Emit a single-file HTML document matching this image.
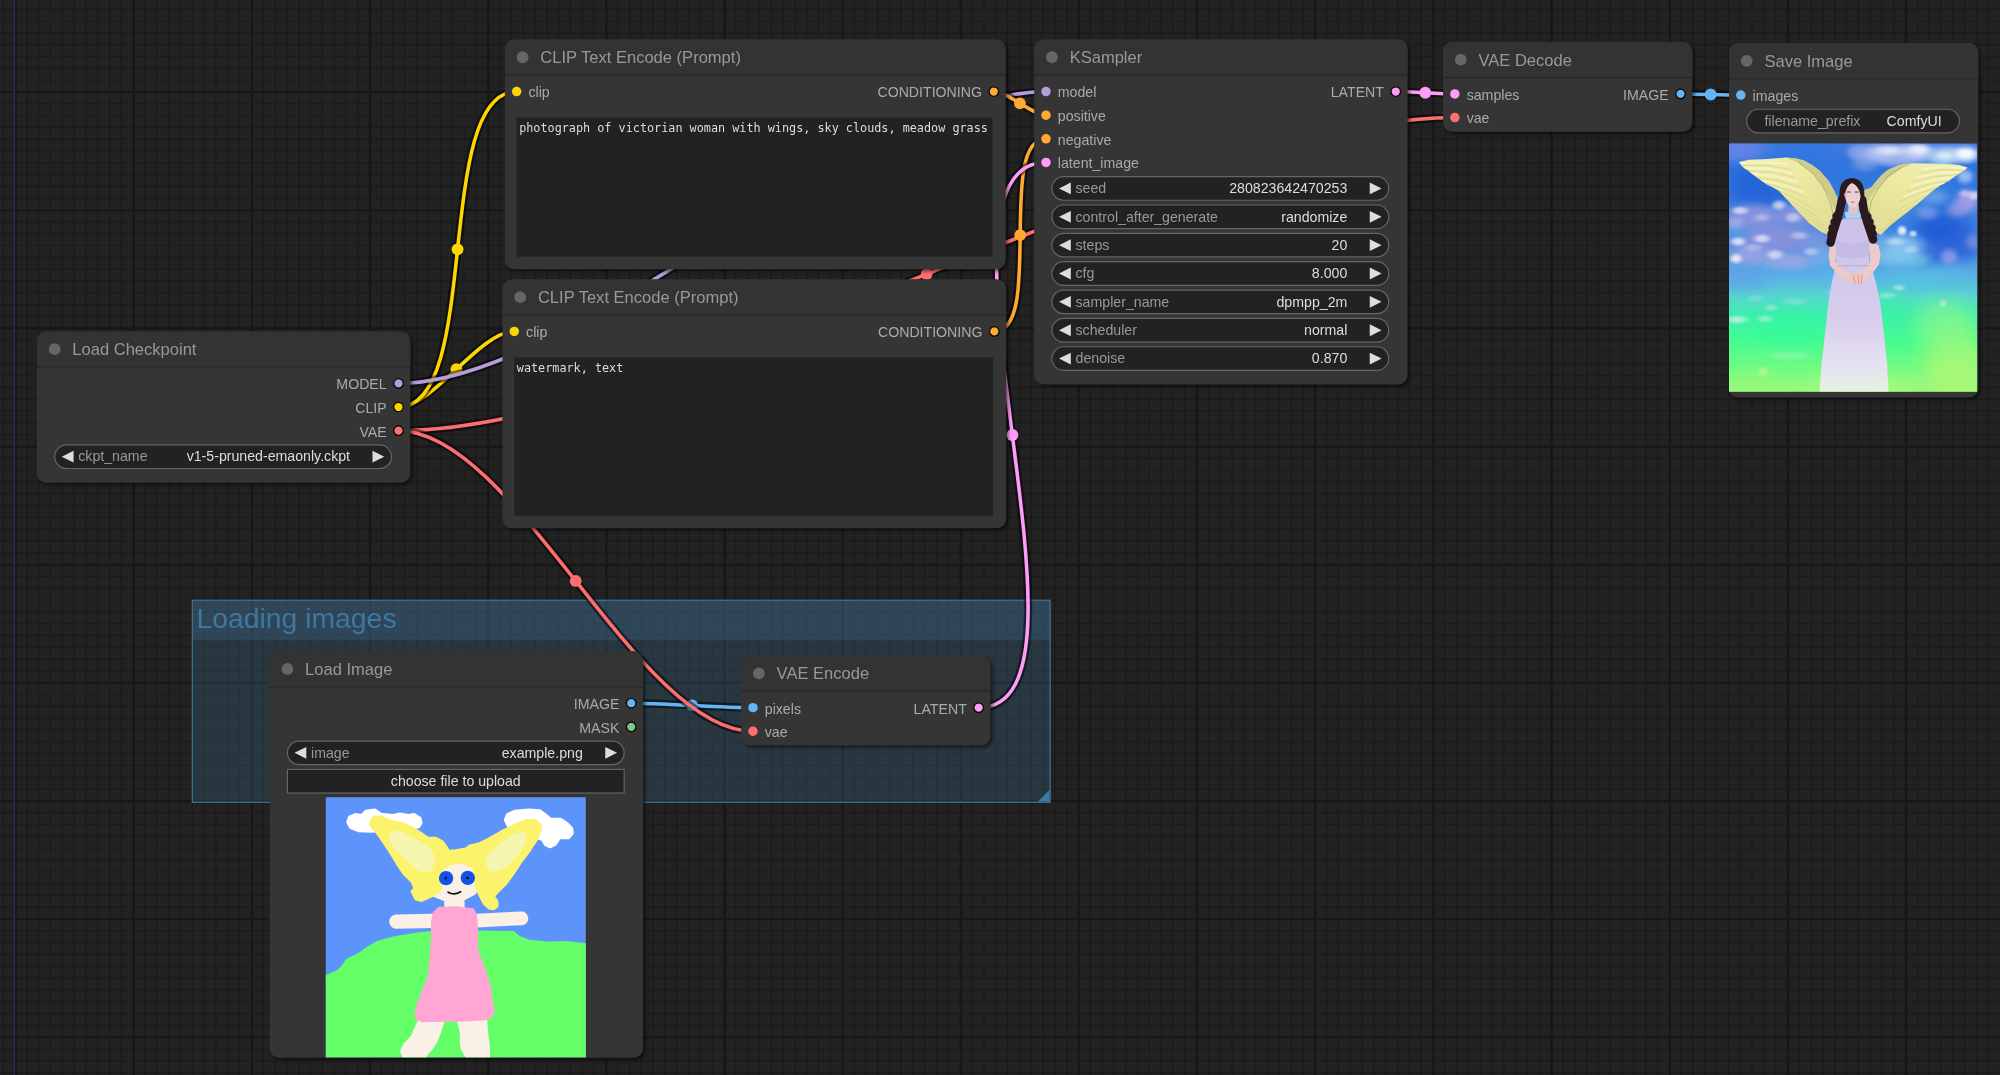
<!DOCTYPE html>
<html lang="en"><head><meta charset="utf-8"><title>ComfyUI</title>
<style>
html,body{margin:0;padding:0;background:#222;overflow:hidden}
body{width:2000px;height:1075px;position:relative;font-family:"Liberation Sans",sans-serif}
#bg,#graph{position:absolute;left:0;top:0;width:2000px;height:1075px;display:block}
#graph{will-change:transform}
text{font-family:"Liberation Sans",sans-serif;font-size:12px}
.nbody{fill:#353535}
.ntitle{fill:#333}
.tt{font-size:14px;fill:#999}
.sl{fill:#aaa}
.r{text-anchor:end}
.c{text-anchor:middle}
.wb{fill:#222;stroke:#666;stroke-width:1}
.ar{fill:#ddd}
.wl{fill:#999}
.wv{fill:#ddd}
.ta{fill:#222}
.mono{font-family:"DejaVu Sans Mono","Liberation Mono",monospace;font-size:10px;fill:#ddd}
.link path{fill:none;stroke-linejoin:round}
.gtitle{font-size:24px;fill:#3f789e}

</style></head><body>
<svg id="bg" width="2000" height="1075" viewBox="0 0 2000 1075">
<rect width="2000" height="1075" fill="#222222"/>
<path fill="#1b1b1b" d="M2.664 0h1.182v1075h-1.182zM26.296 0h1.182v1075h-1.182zM38.112 0h1.182v1075h-1.182zM49.928 0h1.182v1075h-1.182zM61.744 0h1.182v1075h-1.182zM73.56 0h1.182v1075h-1.182zM85.376 0h1.182v1075h-1.182zM97.192 0h1.182v1075h-1.182zM109.008 0h1.182v1075h-1.182zM120.824 0h1.182v1075h-1.182zM144.456 0h1.182v1075h-1.182zM156.272 0h1.182v1075h-1.182zM168.088 0h1.182v1075h-1.182zM179.904 0h1.182v1075h-1.182zM191.72 0h1.182v1075h-1.182zM203.536 0h1.182v1075h-1.182zM215.352 0h1.182v1075h-1.182zM227.168 0h1.182v1075h-1.182zM238.984 0h1.182v1075h-1.182zM262.616 0h1.182v1075h-1.182zM274.432 0h1.182v1075h-1.182zM286.248 0h1.182v1075h-1.182zM298.064 0h1.182v1075h-1.182zM309.88 0h1.182v1075h-1.182zM321.696 0h1.182v1075h-1.182zM333.512 0h1.182v1075h-1.182zM345.328 0h1.182v1075h-1.182zM357.144 0h1.182v1075h-1.182zM380.776 0h1.182v1075h-1.182zM392.592 0h1.182v1075h-1.182zM404.408 0h1.182v1075h-1.182zM416.224 0h1.182v1075h-1.182zM428.04 0h1.182v1075h-1.182zM439.856 0h1.182v1075h-1.182zM451.672 0h1.182v1075h-1.182zM463.488 0h1.182v1075h-1.182zM475.304 0h1.182v1075h-1.182zM498.936 0h1.182v1075h-1.182zM510.752 0h1.182v1075h-1.182zM522.568 0h1.182v1075h-1.182zM534.384 0h1.182v1075h-1.182zM546.2 0h1.182v1075h-1.182zM558.016 0h1.182v1075h-1.182zM569.832 0h1.182v1075h-1.182zM581.648 0h1.182v1075h-1.182zM593.464 0h1.182v1075h-1.182zM617.096 0h1.182v1075h-1.182zM628.912 0h1.182v1075h-1.182zM640.728 0h1.182v1075h-1.182zM652.544 0h1.182v1075h-1.182zM664.36 0h1.182v1075h-1.182zM676.176 0h1.182v1075h-1.182zM687.992 0h1.182v1075h-1.182zM699.808 0h1.182v1075h-1.182zM711.624 0h1.182v1075h-1.182zM735.256 0h1.182v1075h-1.182zM747.072 0h1.182v1075h-1.182zM758.888 0h1.182v1075h-1.182zM770.704 0h1.182v1075h-1.182zM782.52 0h1.182v1075h-1.182zM794.336 0h1.182v1075h-1.182zM806.152 0h1.182v1075h-1.182zM817.968 0h1.182v1075h-1.182zM829.784 0h1.182v1075h-1.182zM853.416 0h1.182v1075h-1.182zM865.232 0h1.182v1075h-1.182zM877.048 0h1.182v1075h-1.182zM888.864 0h1.182v1075h-1.182zM900.68 0h1.182v1075h-1.182zM912.496 0h1.182v1075h-1.182zM924.312 0h1.182v1075h-1.182zM936.128 0h1.182v1075h-1.182zM947.944 0h1.182v1075h-1.182zM971.576 0h1.182v1075h-1.182zM983.392 0h1.182v1075h-1.182zM995.208 0h1.182v1075h-1.182zM1007.024 0h1.182v1075h-1.182zM1018.84 0h1.182v1075h-1.182zM1030.656 0h1.182v1075h-1.182zM1042.472 0h1.182v1075h-1.182zM1054.288 0h1.182v1075h-1.182zM1066.104 0h1.182v1075h-1.182zM1089.736 0h1.182v1075h-1.182zM1101.552 0h1.182v1075h-1.182zM1113.368 0h1.182v1075h-1.182zM1125.184 0h1.182v1075h-1.182zM1137 0h1.182v1075h-1.182zM1148.816 0h1.182v1075h-1.182zM1160.632 0h1.182v1075h-1.182zM1172.448 0h1.182v1075h-1.182zM1184.264 0h1.182v1075h-1.182zM1207.896 0h1.182v1075h-1.182zM1219.712 0h1.182v1075h-1.182zM1231.528 0h1.182v1075h-1.182zM1243.344 0h1.182v1075h-1.182zM1255.16 0h1.182v1075h-1.182zM1266.976 0h1.182v1075h-1.182zM1278.792 0h1.182v1075h-1.182zM1290.608 0h1.182v1075h-1.182zM1302.424 0h1.182v1075h-1.182zM1326.056 0h1.182v1075h-1.182zM1337.872 0h1.182v1075h-1.182zM1349.688 0h1.182v1075h-1.182zM1361.504 0h1.182v1075h-1.182zM1373.32 0h1.182v1075h-1.182zM1385.136 0h1.182v1075h-1.182zM1396.952 0h1.182v1075h-1.182zM1408.768 0h1.182v1075h-1.182zM1420.584 0h1.182v1075h-1.182zM1444.216 0h1.182v1075h-1.182zM1456.032 0h1.182v1075h-1.182zM1467.848 0h1.182v1075h-1.182zM1479.664 0h1.182v1075h-1.182zM1491.48 0h1.182v1075h-1.182zM1503.296 0h1.182v1075h-1.182zM1515.112 0h1.182v1075h-1.182zM1526.928 0h1.182v1075h-1.182zM1538.744 0h1.182v1075h-1.182zM1562.376 0h1.182v1075h-1.182zM1574.192 0h1.182v1075h-1.182zM1586.008 0h1.182v1075h-1.182zM1597.824 0h1.182v1075h-1.182zM1609.64 0h1.182v1075h-1.182zM1621.456 0h1.182v1075h-1.182zM1633.272 0h1.182v1075h-1.182zM1645.088 0h1.182v1075h-1.182zM1656.904 0h1.182v1075h-1.182zM1680.536 0h1.182v1075h-1.182zM1692.352 0h1.182v1075h-1.182zM1704.168 0h1.182v1075h-1.182zM1715.984 0h1.182v1075h-1.182zM1727.8 0h1.182v1075h-1.182zM1739.616 0h1.182v1075h-1.182zM1751.432 0h1.182v1075h-1.182zM1763.248 0h1.182v1075h-1.182zM1775.064 0h1.182v1075h-1.182zM1798.696 0h1.182v1075h-1.182zM1810.512 0h1.182v1075h-1.182zM1822.328 0h1.182v1075h-1.182zM1834.144 0h1.182v1075h-1.182zM1845.96 0h1.182v1075h-1.182zM1857.776 0h1.182v1075h-1.182zM1869.592 0h1.182v1075h-1.182zM1881.408 0h1.182v1075h-1.182zM1893.224 0h1.182v1075h-1.182zM1916.856 0h1.182v1075h-1.182zM1928.672 0h1.182v1075h-1.182zM1940.488 0h1.182v1075h-1.182zM1952.304 0h1.182v1075h-1.182zM1964.12 0h1.182v1075h-1.182zM1975.936 0h1.182v1075h-1.182zM1987.752 0h1.182v1075h-1.182zM1999.568 0h1.182v1075h-1.182zM0 8.592h2000v1.182h-2000zM0 20.408h2000v1.182h-2000zM0 32.224h2000v1.182h-2000zM0 44.04h2000v1.182h-2000zM0 55.856h2000v1.182h-2000zM0 67.672h2000v1.182h-2000zM0 79.488h2000v1.182h-2000zM0 103.12h2000v1.182h-2000zM0 114.936h2000v1.182h-2000zM0 126.752h2000v1.182h-2000zM0 138.568h2000v1.182h-2000zM0 150.384h2000v1.182h-2000zM0 162.2h2000v1.182h-2000zM0 174.016h2000v1.182h-2000zM0 185.832h2000v1.182h-2000zM0 197.648h2000v1.182h-2000zM0 221.28h2000v1.182h-2000zM0 233.096h2000v1.182h-2000zM0 244.912h2000v1.182h-2000zM0 256.728h2000v1.182h-2000zM0 268.544h2000v1.182h-2000zM0 280.36h2000v1.182h-2000zM0 292.176h2000v1.182h-2000zM0 303.992h2000v1.182h-2000zM0 315.808h2000v1.182h-2000zM0 339.44h2000v1.182h-2000zM0 351.256h2000v1.182h-2000zM0 363.072h2000v1.182h-2000zM0 374.888h2000v1.182h-2000zM0 386.704h2000v1.182h-2000zM0 398.52h2000v1.182h-2000zM0 410.336h2000v1.182h-2000zM0 422.152h2000v1.182h-2000zM0 433.968h2000v1.182h-2000zM0 457.6h2000v1.182h-2000zM0 469.416h2000v1.182h-2000zM0 481.232h2000v1.182h-2000zM0 493.048h2000v1.182h-2000zM0 504.864h2000v1.182h-2000zM0 516.68h2000v1.182h-2000zM0 528.496h2000v1.182h-2000zM0 540.312h2000v1.182h-2000zM0 552.128h2000v1.182h-2000zM0 575.76h2000v1.182h-2000zM0 587.576h2000v1.182h-2000zM0 599.392h2000v1.182h-2000zM0 611.208h2000v1.182h-2000zM0 623.024h2000v1.182h-2000zM0 634.84h2000v1.182h-2000zM0 646.656h2000v1.182h-2000zM0 658.472h2000v1.182h-2000zM0 670.288h2000v1.182h-2000zM0 693.92h2000v1.182h-2000zM0 705.736h2000v1.182h-2000zM0 717.552h2000v1.182h-2000zM0 729.368h2000v1.182h-2000zM0 741.184h2000v1.182h-2000zM0 753h2000v1.182h-2000zM0 764.816h2000v1.182h-2000zM0 776.632h2000v1.182h-2000zM0 788.448h2000v1.182h-2000zM0 812.08h2000v1.182h-2000zM0 823.896h2000v1.182h-2000zM0 835.712h2000v1.182h-2000zM0 847.528h2000v1.182h-2000zM0 859.344h2000v1.182h-2000zM0 871.16h2000v1.182h-2000zM0 882.976h2000v1.182h-2000zM0 894.792h2000v1.182h-2000zM0 906.608h2000v1.182h-2000zM0 930.24h2000v1.182h-2000zM0 942.056h2000v1.182h-2000zM0 953.872h2000v1.182h-2000zM0 965.688h2000v1.182h-2000zM0 977.504h2000v1.182h-2000zM0 989.32h2000v1.182h-2000zM0 1001.136h2000v1.182h-2000zM0 1012.952h2000v1.182h-2000zM0 1024.768h2000v1.182h-2000zM0 1048.4h2000v1.182h-2000zM0 1060.216h2000v1.182h-2000zM0 1072.032h2000v1.182h-2000z"/>
<path fill="#171717" d="M14.362 0h2.363v1075h-2.363zM132.522 0h2.363v1075h-2.363zM250.682 0h2.363v1075h-2.363zM368.842 0h2.363v1075h-2.363zM487.002 0h2.363v1075h-2.363zM605.162 0h2.363v1075h-2.363zM723.322 0h2.363v1075h-2.363zM841.482 0h2.363v1075h-2.363zM959.642 0h2.363v1075h-2.363zM1077.802 0h2.363v1075h-2.363zM1195.962 0h2.363v1075h-2.363zM1314.122 0h2.363v1075h-2.363zM1432.282 0h2.363v1075h-2.363zM1550.442 0h2.363v1075h-2.363zM1668.602 0h2.363v1075h-2.363zM1786.762 0h2.363v1075h-2.363zM1904.922 0h2.363v1075h-2.363zM0 91.008h2000v2.245h-2000zM0 209.168h2000v2.245h-2000zM0 327.328h2000v2.245h-2000zM0 445.488h2000v2.245h-2000zM0 563.648h2000v2.245h-2000zM0 681.808h2000v2.245h-2000zM0 799.968h2000v2.245h-2000zM0 918.128h2000v2.245h-2000zM0 1036.288h2000v2.245h-2000z"/>
</svg>
<svg id="graph" width="2000" height="1075" viewBox="0 0 2000 1075">
<defs><filter id="sh" x="-5%" y="-5%" width="112%" height="115%" color-interpolation-filters="sRGB"><feDropShadow dx="2" dy="2" stdDeviation="1.5" flood-color="#000" flood-opacity=".5"/></filter></defs>
<g id="world" transform="translate(14.48 -144.78) scale(1.1816)">
<rect x="0" y="0" width="2000" height="1075" fill="none" stroke="#235" stroke-width="1"/>
<g class="group">
<rect x="150.5" y="630.5" width="726" height="33.599999999999994" fill="#3f789e" fill-opacity=".25"/>
<rect x="150.5" y="630.5" width="726" height="171" fill="#3f789e" fill-opacity=".25"/>
<rect x="150.5" y="630.5" width="726" height="171" fill="none" stroke="#3f789e" stroke-width="1"/>
<path d="M876 801L866 801L876 791Z" fill="#3f789e"/>
<text class="gtitle" x="154" y="653.7">Loading images</text>
</g>
<g id="links">
<g class="link"><path d="M325 467C354.262 467 393.738 403 423 403" stroke="#000" stroke-opacity=".5" stroke-width="7"/><path d="M325 467C354.262 467 393.738 403 423 403" stroke="#FFD500" stroke-width="3"/><circle cx="374" cy="435" r="5" fill="#FFD500"/></g>
<g class="link"><path d="M325 467C396.278 467 353.722 200 425 200" stroke="#000" stroke-opacity=".5" stroke-width="7"/><path d="M325 467C396.278 467 353.722 200 425 200" stroke="#FFD500" stroke-width="3"/><circle cx="375" cy="333.5" r="5" fill="#FFD500"/></g>
<g class="link"><path d="M1169 200C1181.51 200 1206.49 202 1219 202" stroke="#000" stroke-opacity=".5" stroke-width="7"/><path d="M1169 200C1181.51 200 1206.49 202 1219 202" stroke="#FF9CF9" stroke-width="3"/><circle cx="1194" cy="201" r="5" fill="#FF9CF9"/></g>
<g class="link"><path d="M325 487C558.112 487 985.888 222 1219 222" stroke="#000" stroke-opacity=".5" stroke-width="7"/><path d="M325 487C558.112 487 985.888 222 1219 222" stroke="#FF6E6E" stroke-width="3"/><circle cx="772" cy="354.5" r="5" fill="#FF6E6E"/></g>
<g class="link"><path d="M1410 202C1422.752 202 1448.248 203 1461 203" stroke="#000" stroke-opacity=".5" stroke-width="7"/><path d="M1410 202C1422.752 202 1448.248 203 1461 203" stroke="#64B5F6" stroke-width="3"/><circle cx="1435.5" cy="202.5" r="5" fill="#64B5F6"/></g>
<g class="link"><path d="M521.98 717.68C547.747 717.68 599.213 721.4 624.98 721.4" stroke="#000" stroke-opacity=".5" stroke-width="7"/><path d="M521.98 717.68C547.747 717.68 599.213 721.4 624.98 721.4" stroke="#64B5F6" stroke-width="3"/><circle cx="573.48" cy="719.54" r="5" fill="#64B5F6"/></g>
<g class="link"><path d="M325 487C423.332 487 526.648 741.4 624.98 741.4" stroke="#000" stroke-opacity=".5" stroke-width="7"/><path d="M325 487C423.332 487 526.648 741.4 624.98 741.4" stroke="#FF6E6E" stroke-width="3"/><circle cx="474.99" cy="614.2" r="5" fill="#FF6E6E"/></g>
<g class="link"><path d="M325 447C475.273 447 722.727 200 873 200" stroke="#000" stroke-opacity=".5" stroke-width="7"/><path d="M325 447C475.273 447 722.727 200 873 200" stroke="#B39DDB" stroke-width="3"/><circle cx="599" cy="323.5" r="5" fill="#B39DDB"/></g>
<g class="link"><path d="M828.845 200C840.963 200 860.882 220 873 220" stroke="#000" stroke-opacity=".5" stroke-width="7"/><path d="M828.845 200C840.963 200 860.882 220 873 220" stroke="#FFA931" stroke-width="3"/><circle cx="850.923" cy="210" r="5" fill="#FFA931"/></g>
<g class="link"><path d="M829.278 403C871.469 403 830.809 240 873 240" stroke="#000" stroke-opacity=".5" stroke-width="7"/><path d="M829.278 403C871.469 403 830.809 240 873 240" stroke="#FFA931" stroke-width="3"/><circle cx="851.139" cy="321.5" r="5" fill="#FFA931"/></g>
<g class="link"><path d="M815.98 721.4C932.207 721.4 756.773 260 873 260" stroke="#000" stroke-opacity=".5" stroke-width="7"/><path d="M815.98 721.4C932.207 721.4 756.773 260 873 260" stroke="#FF9CF9" stroke-width="3"/><circle cx="844.49" cy="490.7" r="5" fill="#FF9CF9"/></g>
</g>
<g class="node" transform="translate(413 389)">
<rect class="nbody" x="0" y="-30" width="426.278" height="210.606" rx="8" filter="url(#sh)"/>
<path class="ntitle" d="M0 0V-22a8 8 0 0 1 8-8H418.278a8 8 0 0 1 8 8V0Z"/>
<rect x="0" y="-.55" width="426.278" height="1.45" fill="#000" fill-opacity=".2"/>
<circle cx="15" cy="-15" r="5" fill="#666"/>
<text class="tt" x="30" y="-10">CLIP Text Encode (Prompt)</text>
<circle cx="10" cy="14" r="4" fill="#FFD500"/>
<text class="sl" x="20" y="19">clip</text>
<circle cx="416.278" cy="14" r="4" fill="#FFA931" stroke="#000"/>
<text class="sl r" x="406.278" y="19">CONDITIONING</text>
<rect class="ta" x="10" y="36" width="405.278" height="134.106"/>
<text class="mono" x="12.1" y="48.65">watermark, text</text>
</g>
<g class="node" transform="translate(415 186)">
<rect class="nbody" x="0" y="-30" width="423.845" height="194.313" rx="8" filter="url(#sh)"/>
<path class="ntitle" d="M0 0V-22a8 8 0 0 1 8-8H415.845a8 8 0 0 1 8 8V0Z"/>
<rect x="0" y="-.55" width="423.845" height="1.45" fill="#000" fill-opacity=".2"/>
<circle cx="15" cy="-15" r="5" fill="#666"/>
<text class="tt" x="30" y="-10">CLIP Text Encode (Prompt)</text>
<circle cx="10" cy="14" r="4" fill="#FFD500"/>
<text class="sl" x="20" y="19">clip</text>
<circle cx="413.845" cy="14" r="4" fill="#FFA931" stroke="#000"/>
<text class="sl r" x="403.845" y="19">CONDITIONING</text>
<rect class="ta" x="10" y="36" width="402.845" height="117.813"/>
<text class="mono" x="12.1" y="48.65">photograph of victorian woman with wings, sky clouds, meadow grass</text>
</g>
<g class="node" transform="translate(1209 188)">
<rect class="nbody" x="0" y="-30" width="211" height="76" rx="8" filter="url(#sh)"/>
<path class="ntitle" d="M0 0V-22a8 8 0 0 1 8-8H203a8 8 0 0 1 8 8V0Z"/>
<rect x="0" y="-.55" width="211" height="1.45" fill="#000" fill-opacity=".2"/>
<circle cx="15" cy="-15" r="5" fill="#666"/>
<text class="tt" x="30" y="-10">VAE Decode</text>
<circle cx="10" cy="14" r="4" fill="#FF9CF9"/>
<text class="sl" x="20" y="19">samples</text>
<circle cx="10" cy="34" r="4" fill="#FF6E6E"/>
<text class="sl" x="20" y="39">vae</text>
<circle cx="201" cy="14" r="4" fill="#64B5F6" stroke="#000"/>
<text class="sl r" x="191" y="19">IMAGE</text>
</g>
<g class="node" transform="translate(1451 189)">
<rect class="nbody" x="0" y="-30" width="211" height="300" rx="8" filter="url(#sh)"/>
<path class="ntitle" d="M0 0V-22a8 8 0 0 1 8-8H203a8 8 0 0 1 8 8V0Z"/>
<rect x="0" y="-.55" width="211" height="1.45" fill="#000" fill-opacity=".2"/>
<circle cx="15" cy="-15" r="5" fill="#666"/>
<text class="tt" x="30" y="-10">Save Image</text>
<circle cx="10" cy="14" r="4" fill="#64B5F6"/>
<text class="sl" x="20" y="19">images</text>
<rect class="wb" x="15" y="26" width="180" height="20" rx="10"/>
<text class="wl" x="30" y="40">filename_prefix</text>
<text class="wv r" x="180" y="40">ComfyUI</text>
<g class="img" transform="translate(0 55) scale(0.846774)"><defs><linearGradient id="sky" x1="0" y1="0" x2="0" y2="1"><stop offset="0" stop-color="#4279e2"/><stop offset=".10" stop-color="#2f74de"/><stop offset=".30" stop-color="#3a7fe0"/><stop offset=".44" stop-color="#4a90e3"/><stop offset=".54" stop-color="#5cb2e6"/><stop offset=".61" stop-color="#55d6cf"/><stop offset=".69" stop-color="#3cf0aa"/><stop offset=".78" stop-color="#44fb92"/><stop offset=".89" stop-color="#70fb82"/><stop offset="1" stop-color="#96f97a"/></linearGradient><linearGradient id="dress" x1="0" y1="0" x2="0" y2="1"><stop offset="0" stop-color="#cbc1e8"/><stop offset=".62" stop-color="#d8cfee"/><stop offset=".85" stop-color="#e6e2f0"/><stop offset="1" stop-color="#e4f2e2"/></linearGradient><linearGradient id="wingL" x1="0" y1="0" x2="1" y2="1"><stop offset="0" stop-color="#f3f0b8"/><stop offset=".5" stop-color="#ebe9a0"/><stop offset="1" stop-color="#dddc92"/></linearGradient><linearGradient id="wingR" x1="1" y1="0" x2="0" y2="1"><stop offset="0" stop-color="#f3f0b8"/><stop offset=".5" stop-color="#ebe9a0"/><stop offset="1" stop-color="#dddc92"/></linearGradient><clipPath id="aclip"><rect width="248" height="248"/></clipPath></defs><g clip-path="url(#aclip)"><rect x="-4" y="-4" width="256" height="256" fill="url(#sky)"/><radialGradient id="ag1"><stop offset="0" stop-color="#2360d8" stop-opacity="0.9"/><stop offset=".4" stop-color="#2360d8" stop-opacity="0.738"/><stop offset=".72" stop-color="#2360d8" stop-opacity="0.27"/><stop offset="1" stop-color="#2360d8" stop-opacity="0"/></radialGradient><ellipse cx="30" cy="42" rx="49" ry="33" fill="url(#ag1)"/><radialGradient id="ag2"><stop offset="0" stop-color="#6f86ea" stop-opacity="0.8"/><stop offset=".4" stop-color="#6f86ea" stop-opacity="0.656"/><stop offset=".72" stop-color="#6f86ea" stop-opacity="0.24"/><stop offset="1" stop-color="#6f86ea" stop-opacity="0"/></radialGradient><ellipse cx="12" cy="6" rx="41" ry="19" fill="url(#ag2)"/><radialGradient id="ag3"><stop offset="0" stop-color="#2f78e0" stop-opacity="0.7"/><stop offset=".4" stop-color="#2f78e0" stop-opacity="0.574"/><stop offset=".72" stop-color="#2f78e0" stop-opacity="0.21"/><stop offset="1" stop-color="#2f78e0" stop-opacity="0"/></radialGradient><ellipse cx="70" cy="8" rx="51" ry="19" fill="url(#ag3)"/><radialGradient id="ag4"><stop offset="0" stop-color="#1f58d4" stop-opacity="0.95"/><stop offset=".4" stop-color="#1f58d4" stop-opacity="0.779"/><stop offset=".72" stop-color="#1f58d4" stop-opacity="0.285"/><stop offset="1" stop-color="#1f58d4" stop-opacity="0"/></radialGradient><ellipse cx="212" cy="88" rx="43" ry="29" fill="url(#ag4)"/><radialGradient id="ag5"><stop offset="0" stop-color="#2a64d8" stop-opacity="0.8"/><stop offset=".4" stop-color="#2a64d8" stop-opacity="0.656"/><stop offset=".72" stop-color="#2a64d8" stop-opacity="0.24"/><stop offset="1" stop-color="#2a64d8" stop-opacity="0"/></radialGradient><ellipse cx="200" cy="108" rx="41" ry="20" fill="url(#ag5)"/><radialGradient id="ag6"><stop offset="0" stop-color="#2a62d8" stop-opacity="0.8"/><stop offset=".4" stop-color="#2a62d8" stop-opacity="0.656"/><stop offset=".72" stop-color="#2a62d8" stop-opacity="0.24"/><stop offset="1" stop-color="#2a62d8" stop-opacity="0"/></radialGradient><ellipse cx="236" cy="102" rx="25" ry="23" fill="url(#ag6)"/><radialGradient id="ag7"><stop offset="0" stop-color="#3f97e6" stop-opacity="0.6"/><stop offset=".4" stop-color="#3f97e6" stop-opacity="0.492"/><stop offset=".72" stop-color="#3f97e6" stop-opacity="0.18"/><stop offset="1" stop-color="#3f97e6" stop-opacity="0"/></radialGradient><ellipse cx="175" cy="50" rx="31" ry="31" fill="url(#ag7)"/><radialGradient id="ag8"><stop offset="0" stop-color="#b4f874" stop-opacity="0.8"/><stop offset=".4" stop-color="#b4f874" stop-opacity="0.656"/><stop offset=".72" stop-color="#b4f874" stop-opacity="0.24"/><stop offset="1" stop-color="#b4f874" stop-opacity="0"/></radialGradient><ellipse cx="228" cy="225" rx="51" ry="56" fill="url(#ag8)"/><radialGradient id="ag9"><stop offset="0" stop-color="#9df884" stop-opacity="0.6"/><stop offset=".4" stop-color="#9df884" stop-opacity="0.492"/><stop offset=".72" stop-color="#9df884" stop-opacity="0.18"/><stop offset="1" stop-color="#9df884" stop-opacity="0"/></radialGradient><ellipse cx="215" cy="180" rx="46" ry="36" fill="url(#ag9)"/><radialGradient id="ag10"><stop offset="0" stop-color="#b6f884" stop-opacity="0.7"/><stop offset=".4" stop-color="#b6f884" stop-opacity="0.574"/><stop offset=".72" stop-color="#b6f884" stop-opacity="0.21"/><stop offset="1" stop-color="#b6f884" stop-opacity="0"/></radialGradient><ellipse cx="130" cy="250" rx="81" ry="33" fill="url(#ag10)"/><radialGradient id="ag11"><stop offset="0" stop-color="#9cf97c" stop-opacity="0.6"/><stop offset=".4" stop-color="#9cf97c" stop-opacity="0.492"/><stop offset=".72" stop-color="#9cf97c" stop-opacity="0.18"/><stop offset="1" stop-color="#9cf97c" stop-opacity="0"/></radialGradient><ellipse cx="20" cy="250" rx="61" ry="29" fill="url(#ag11)"/><radialGradient id="ag12"><stop offset="0" stop-color="#37f5a0" stop-opacity="0.5"/><stop offset=".4" stop-color="#37f5a0" stop-opacity="0.41"/><stop offset=".72" stop-color="#37f5a0" stop-opacity="0.15"/><stop offset="1" stop-color="#37f5a0" stop-opacity="0"/></radialGradient><ellipse cx="150" cy="165" rx="51" ry="25" fill="url(#ag12)"/><radialGradient id="ag13"><stop offset="0" stop-color="#2ffba0" stop-opacity="0.5"/><stop offset=".4" stop-color="#2ffba0" stop-opacity="0.41"/><stop offset=".72" stop-color="#2ffba0" stop-opacity="0.15"/><stop offset="1" stop-color="#2ffba0" stop-opacity="0"/></radialGradient><ellipse cx="60" cy="185" rx="61" ry="29" fill="url(#ag13)"/><radialGradient id="ag14"><stop offset="0" stop-color="#5bb4e8" stop-opacity="0.5"/><stop offset=".4" stop-color="#5bb4e8" stop-opacity="0.41"/><stop offset=".72" stop-color="#5bb4e8" stop-opacity="0.15"/><stop offset="1" stop-color="#5bb4e8" stop-opacity="0"/></radialGradient><ellipse cx="110" cy="130" rx="41" ry="23" fill="url(#ag14)"/><radialGradient id="ag15"><stop offset="0" stop-color="#52c6dc" stop-opacity="0.5"/><stop offset=".4" stop-color="#52c6dc" stop-opacity="0.41"/><stop offset=".72" stop-color="#52c6dc" stop-opacity="0.15"/><stop offset="1" stop-color="#52c6dc" stop-opacity="0"/></radialGradient><ellipse cx="190" cy="135" rx="61" ry="19" fill="url(#ag15)"/><radialGradient id="ag16"><stop offset="0" stop-color="#5f9ee6" stop-opacity="0.6"/><stop offset=".4" stop-color="#5f9ee6" stop-opacity="0.492"/><stop offset=".72" stop-color="#5f9ee6" stop-opacity="0.18"/><stop offset="1" stop-color="#5f9ee6" stop-opacity="0"/></radialGradient><ellipse cx="15" cy="135" rx="36" ry="21" fill="url(#ag16)"/><radialGradient id="ag17"><stop offset="0" stop-color="#8a93dc" stop-opacity="0.8"/><stop offset=".4" stop-color="#8a93dc" stop-opacity="0.656"/><stop offset=".72" stop-color="#8a93dc" stop-opacity="0.24"/><stop offset="1" stop-color="#8a93dc" stop-opacity="0"/></radialGradient><ellipse cx="48" cy="92" rx="63" ry="33" fill="url(#ag17)"/><radialGradient id="ag18"><stop offset="0" stop-color="#9097de" stop-opacity="0.6"/><stop offset=".4" stop-color="#9097de" stop-opacity="0.492"/><stop offset=".72" stop-color="#9097de" stop-opacity="0.18"/><stop offset="1" stop-color="#9097de" stop-opacity="0"/></radialGradient><ellipse cx="20" cy="72" rx="33" ry="17" fill="url(#ag18)"/><radialGradient id="ag19"><stop offset="0" stop-color="#7fc0ec" stop-opacity="0.55"/><stop offset=".4" stop-color="#7fc0ec" stop-opacity="0.451"/><stop offset=".72" stop-color="#7fc0ec" stop-opacity="0.165"/><stop offset="1" stop-color="#7fc0ec" stop-opacity="0"/></radialGradient><ellipse cx="172" cy="108" rx="37" ry="23" fill="url(#ag19)"/><radialGradient id="ag20"><stop offset="0" stop-color="#b4c0ee" stop-opacity="0.6"/><stop offset=".4" stop-color="#b4c0ee" stop-opacity="0.492"/><stop offset=".72" stop-color="#b4c0ee" stop-opacity="0.18"/><stop offset="1" stop-color="#b4c0ee" stop-opacity="0"/></radialGradient><ellipse cx="175" cy="10" rx="61" ry="16" fill="url(#ag20)"/><radialGradient id="ag21"><stop offset="0" stop-color="#8a94de" stop-opacity="0.9"/><stop offset=".4" stop-color="#8a94de" stop-opacity="0.738"/><stop offset=".72" stop-color="#8a94de" stop-opacity="0.27"/><stop offset="1" stop-color="#8a94de" stop-opacity="0"/></radialGradient><ellipse cx="28" cy="72" rx="35" ry="14" fill="url(#ag21)"/><radialGradient id="ag22"><stop offset="0" stop-color="#8f97de" stop-opacity="0.85"/><stop offset=".4" stop-color="#8f97de" stop-opacity="0.697"/><stop offset=".72" stop-color="#8f97de" stop-opacity="0.255"/><stop offset="1" stop-color="#8f97de" stop-opacity="0"/></radialGradient><ellipse cx="70" cy="70" rx="35" ry="14" fill="url(#ag22)"/><radialGradient id="ag23"><stop offset="0" stop-color="#a9abe6" stop-opacity="0.8"/><stop offset=".4" stop-color="#a9abe6" stop-opacity="0.656"/><stop offset=".72" stop-color="#a9abe6" stop-opacity="0.24"/><stop offset="1" stop-color="#a9abe6" stop-opacity="0"/></radialGradient><ellipse cx="100" cy="66" rx="17" ry="12" fill="url(#ag23)"/><radialGradient id="ag24"><stop offset="0" stop-color="#8790dc" stop-opacity="0.9"/><stop offset=".4" stop-color="#8790dc" stop-opacity="0.738"/><stop offset=".72" stop-color="#8790dc" stop-opacity="0.27"/><stop offset="1" stop-color="#8790dc" stop-opacity="0"/></radialGradient><ellipse cx="45" cy="96" rx="50" ry="17" fill="url(#ag24)"/><radialGradient id="ag25"><stop offset="0" stop-color="#7f9be0" stop-opacity="0.7"/><stop offset=".4" stop-color="#7f9be0" stop-opacity="0.574"/><stop offset=".72" stop-color="#7f9be0" stop-opacity="0.21"/><stop offset="1" stop-color="#7f9be0" stop-opacity="0"/></radialGradient><ellipse cx="88" cy="100" rx="23" ry="15" fill="url(#ag25)"/><radialGradient id="ag26"><stop offset="0" stop-color="#9ea4e4" stop-opacity="0.9"/><stop offset=".4" stop-color="#9ea4e4" stop-opacity="0.738"/><stop offset=".72" stop-color="#9ea4e4" stop-opacity="0.27"/><stop offset="1" stop-color="#9ea4e4" stop-opacity="0"/></radialGradient><ellipse cx="20" cy="112" rx="29" ry="14" fill="url(#ag26)"/><radialGradient id="ag27"><stop offset="0" stop-color="#a3abe6" stop-opacity="0.8"/><stop offset=".4" stop-color="#a3abe6" stop-opacity="0.656"/><stop offset=".72" stop-color="#a3abe6" stop-opacity="0.24"/><stop offset="1" stop-color="#a3abe6" stop-opacity="0"/></radialGradient><ellipse cx="60" cy="118" rx="39" ry="12" fill="url(#ag27)"/><radialGradient id="ag28"><stop offset="0" stop-color="#a9b0e8" stop-opacity="0.8"/><stop offset=".4" stop-color="#a9b0e8" stop-opacity="0.656"/><stop offset=".72" stop-color="#a9b0e8" stop-opacity="0.24"/><stop offset="1" stop-color="#a9b0e8" stop-opacity="0"/></radialGradient><ellipse cx="6" cy="80" rx="13" ry="11" fill="url(#ag28)"/><radialGradient id="ag29"><stop offset="0" stop-color="#6f8fde" stop-opacity="0.5"/><stop offset=".4" stop-color="#6f8fde" stop-opacity="0.41"/><stop offset=".72" stop-color="#6f8fde" stop-opacity="0.15"/><stop offset="1" stop-color="#6f8fde" stop-opacity="0"/></radialGradient><ellipse cx="100" cy="84" rx="15" ry="13" fill="url(#ag29)"/><radialGradient id="ag30"><stop offset="0" stop-color="#4f9ee6" stop-opacity="0.7"/><stop offset=".4" stop-color="#4f9ee6" stop-opacity="0.574"/><stop offset=".72" stop-color="#4f9ee6" stop-opacity="0.21"/><stop offset="1" stop-color="#4f9ee6" stop-opacity="0"/></radialGradient><ellipse cx="8" cy="89" rx="17" ry="8.5" fill="url(#ag30)"/><radialGradient id="ag31"><stop offset="0" stop-color="#7fb4e8" stop-opacity="0.6"/><stop offset=".4" stop-color="#7fb4e8" stop-opacity="0.492"/><stop offset=".72" stop-color="#7fb4e8" stop-opacity="0.18"/><stop offset="1" stop-color="#7fb4e8" stop-opacity="0"/></radialGradient><ellipse cx="95" cy="112" rx="21" ry="13" fill="url(#ag31)"/><radialGradient id="ag32"><stop offset="0" stop-color="#b9c5f0" stop-opacity="0.95"/><stop offset=".4" stop-color="#b9c5f0" stop-opacity="0.779"/><stop offset=".72" stop-color="#b9c5f0" stop-opacity="0.285"/><stop offset="1" stop-color="#b9c5f0" stop-opacity="0"/></radialGradient><ellipse cx="152" cy="10" rx="35" ry="13" fill="url(#ag32)"/><radialGradient id="ag33"><stop offset="0" stop-color="#cdd7f4" stop-opacity="0.95"/><stop offset=".4" stop-color="#cdd7f4" stop-opacity="0.779"/><stop offset=".72" stop-color="#cdd7f4" stop-opacity="0.285"/><stop offset="1" stop-color="#cdd7f4" stop-opacity="0"/></radialGradient><ellipse cx="186" cy="9" rx="25" ry="12" fill="url(#ag33)"/><radialGradient id="ag34"><stop offset="0" stop-color="#9fb2ec" stop-opacity="0.7"/><stop offset=".4" stop-color="#9fb2ec" stop-opacity="0.574"/><stop offset=".72" stop-color="#9fb2ec" stop-opacity="0.21"/><stop offset="1" stop-color="#9fb2ec" stop-opacity="0"/></radialGradient><ellipse cx="170" cy="17" rx="27" ry="9" fill="url(#ag34)"/><radialGradient id="ag35"><stop offset="0" stop-color="#c6e0f5" stop-opacity="0.8"/><stop offset=".4" stop-color="#c6e0f5" stop-opacity="0.656"/><stop offset=".72" stop-color="#c6e0f5" stop-opacity="0.24"/><stop offset="1" stop-color="#c6e0f5" stop-opacity="0"/></radialGradient><ellipse cx="224" cy="11" rx="29" ry="12" fill="url(#ag35)"/><radialGradient id="ag36"><stop offset="0" stop-color="#7fb0ec" stop-opacity="0.6"/><stop offset=".4" stop-color="#7fb0ec" stop-opacity="0.492"/><stop offset=".72" stop-color="#7fb0ec" stop-opacity="0.18"/><stop offset="1" stop-color="#7fb0ec" stop-opacity="0"/></radialGradient><ellipse cx="205" cy="53" rx="19" ry="11" fill="url(#ag36)"/><radialGradient id="ag37"><stop offset="0" stop-color="#93a9ea" stop-opacity="0.6"/><stop offset=".4" stop-color="#93a9ea" stop-opacity="0.492"/><stop offset=".72" stop-color="#93a9ea" stop-opacity="0.18"/><stop offset="1" stop-color="#93a9ea" stop-opacity="0"/></radialGradient><ellipse cx="128" cy="8" rx="15" ry="11" fill="url(#ag37)"/><radialGradient id="ag38"><stop offset="0" stop-color="#8ea9e8" stop-opacity="0.6"/><stop offset=".4" stop-color="#8ea9e8" stop-opacity="0.492"/><stop offset=".72" stop-color="#8ea9e8" stop-opacity="0.18"/><stop offset="1" stop-color="#8ea9e8" stop-opacity="0"/></radialGradient><ellipse cx="136" cy="20" rx="19" ry="11" fill="url(#ag38)"/><radialGradient id="ag39"><stop offset="0" stop-color="#b4d8f2" stop-opacity="0.9"/><stop offset=".4" stop-color="#b4d8f2" stop-opacity="0.738"/><stop offset=".72" stop-color="#b4d8f2" stop-opacity="0.27"/><stop offset="1" stop-color="#b4d8f2" stop-opacity="0"/></radialGradient><ellipse cx="214" cy="14" rx="21" ry="12" fill="url(#ag39)"/><radialGradient id="ag40"><stop offset="0" stop-color="#dcecf8" stop-opacity="0.95"/><stop offset=".4" stop-color="#dcecf8" stop-opacity="0.779"/><stop offset=".72" stop-color="#dcecf8" stop-opacity="0.285"/><stop offset="1" stop-color="#dcecf8" stop-opacity="0"/></radialGradient><ellipse cx="238" cy="11" rx="17" ry="11" fill="url(#ag40)"/><radialGradient id="ag41"><stop offset="0" stop-color="#8fc4ee" stop-opacity="0.5"/><stop offset=".4" stop-color="#8fc4ee" stop-opacity="0.41"/><stop offset=".72" stop-color="#8fc4ee" stop-opacity="0.15"/><stop offset="1" stop-color="#8fc4ee" stop-opacity="0"/></radialGradient><ellipse cx="200" cy="27" rx="15" ry="9" fill="url(#ag41)"/><radialGradient id="ag42"><stop offset="0" stop-color="#b4d0f4" stop-opacity="0.8"/><stop offset=".4" stop-color="#b4d0f4" stop-opacity="0.656"/><stop offset=".72" stop-color="#b4d0f4" stop-opacity="0.24"/><stop offset="1" stop-color="#b4d0f4" stop-opacity="0"/></radialGradient><ellipse cx="236" cy="33" rx="11" ry="10" fill="url(#ag42)"/><radialGradient id="ag43"><stop offset="0" stop-color="#a8a0e6" stop-opacity="0.95"/><stop offset=".4" stop-color="#a8a0e6" stop-opacity="0.779"/><stop offset=".72" stop-color="#a8a0e6" stop-opacity="0.285"/><stop offset="1" stop-color="#a8a0e6" stop-opacity="0"/></radialGradient><ellipse cx="238" cy="58" rx="17" ry="16" fill="url(#ag43)"/><radialGradient id="ag44"><stop offset="0" stop-color="#9e9be2" stop-opacity="0.7"/><stop offset=".4" stop-color="#9e9be2" stop-opacity="0.574"/><stop offset=".72" stop-color="#9e9be2" stop-opacity="0.21"/><stop offset="1" stop-color="#9e9be2" stop-opacity="0"/></radialGradient><ellipse cx="228" cy="66" rx="14" ry="11" fill="url(#ag44)"/><radialGradient id="ag45"><stop offset="0" stop-color="#9e9ee6" stop-opacity="0.8"/><stop offset=".4" stop-color="#9e9ee6" stop-opacity="0.656"/><stop offset=".72" stop-color="#9e9ee6" stop-opacity="0.24"/><stop offset="1" stop-color="#9e9ee6" stop-opacity="0"/></radialGradient><ellipse cx="220" cy="113" rx="12" ry="11" fill="url(#ag45)"/><radialGradient id="ag46"><stop offset="0" stop-color="#8590e2" stop-opacity="0.7"/><stop offset=".4" stop-color="#8590e2" stop-opacity="0.574"/><stop offset=".72" stop-color="#8590e2" stop-opacity="0.21"/><stop offset="1" stop-color="#8590e2" stop-opacity="0"/></radialGradient><ellipse cx="244" cy="98" rx="11" ry="12" fill="url(#ag46)"/><radialGradient id="ag47"><stop offset="0" stop-color="#93a8ea" stop-opacity="0.6"/><stop offset=".4" stop-color="#93a8ea" stop-opacity="0.492"/><stop offset=".72" stop-color="#93a8ea" stop-opacity="0.18"/><stop offset="1" stop-color="#93a8ea" stop-opacity="0"/></radialGradient><ellipse cx="198" cy="69" rx="15" ry="10" fill="url(#ag47)"/><radialGradient id="ag48"><stop offset="0" stop-color="#8cc4ee" stop-opacity="0.85"/><stop offset=".4" stop-color="#8cc4ee" stop-opacity="0.697"/><stop offset=".72" stop-color="#8cc4ee" stop-opacity="0.255"/><stop offset="1" stop-color="#8cc4ee" stop-opacity="0"/></radialGradient><ellipse cx="174" cy="102" rx="27" ry="15" fill="url(#ag48)"/><radialGradient id="ag49"><stop offset="0" stop-color="#84cdec" stop-opacity="0.7"/><stop offset=".4" stop-color="#84cdec" stop-opacity="0.574"/><stop offset=".72" stop-color="#84cdec" stop-opacity="0.21"/><stop offset="1" stop-color="#84cdec" stop-opacity="0"/></radialGradient><ellipse cx="164" cy="113" rx="27" ry="12" fill="url(#ag49)"/><radialGradient id="ag50"><stop offset="0" stop-color="#7fd2e6" stop-opacity="0.6"/><stop offset=".4" stop-color="#7fd2e6" stop-opacity="0.492"/><stop offset=".72" stop-color="#7fd2e6" stop-opacity="0.18"/><stop offset="1" stop-color="#7fd2e6" stop-opacity="0"/></radialGradient><ellipse cx="186" cy="116" rx="21" ry="10" fill="url(#ag50)"/><radialGradient id="ag51"><stop offset="0" stop-color="#76b4ea" stop-opacity="0.6"/><stop offset=".4" stop-color="#76b4ea" stop-opacity="0.492"/><stop offset=".72" stop-color="#76b4ea" stop-opacity="0.18"/><stop offset="1" stop-color="#76b4ea" stop-opacity="0"/></radialGradient><ellipse cx="150" cy="100" rx="13" ry="15" fill="url(#ag51)"/><radialGradient id="ag52"><stop offset="0" stop-color="#dcdcf4" stop-opacity="0.9"/><stop offset=".4" stop-color="#dcdcf4" stop-opacity="0.738"/><stop offset=".72" stop-color="#dcdcf4" stop-opacity="0.27"/><stop offset="1" stop-color="#dcdcf4" stop-opacity="0"/></radialGradient><ellipse cx="11" cy="67" rx="11.4" ry="5.4" fill="url(#ag52)"/><radialGradient id="ag53"><stop offset="0" stop-color="#d6d6f2" stop-opacity="0.9"/><stop offset=".4" stop-color="#d6d6f2" stop-opacity="0.738"/><stop offset=".72" stop-color="#d6d6f2" stop-opacity="0.27"/><stop offset="1" stop-color="#d6d6f2" stop-opacity="0"/></radialGradient><ellipse cx="50" cy="61.5" rx="9.4" ry="6.4" fill="url(#ag53)"/><radialGradient id="ag54"><stop offset="0" stop-color="#cfd0f0" stop-opacity="0.8"/><stop offset=".4" stop-color="#cfd0f0" stop-opacity="0.656"/><stop offset=".72" stop-color="#cfd0f0" stop-opacity="0.24"/><stop offset="1" stop-color="#cfd0f0" stop-opacity="0"/></radialGradient><ellipse cx="64" cy="74" rx="10.4" ry="6.4" fill="url(#ag54)"/><radialGradient id="ag55"><stop offset="0" stop-color="#bfc2ec" stop-opacity="0.7"/><stop offset=".4" stop-color="#bfc2ec" stop-opacity="0.574"/><stop offset=".72" stop-color="#bfc2ec" stop-opacity="0.21"/><stop offset="1" stop-color="#bfc2ec" stop-opacity="0"/></radialGradient><ellipse cx="33" cy="74" rx="10.4" ry="5.4" fill="url(#ag55)"/><radialGradient id="ag56"><stop offset="0" stop-color="#e6e8f8" stop-opacity="0.9"/><stop offset=".4" stop-color="#e6e8f8" stop-opacity="0.738"/><stop offset=".72" stop-color="#e6e8f8" stop-opacity="0.27"/><stop offset="1" stop-color="#e6e8f8" stop-opacity="0"/></radialGradient><ellipse cx="9" cy="98" rx="10.4" ry="5.9" fill="url(#ag56)"/><radialGradient id="ag57"><stop offset="0" stop-color="#e0e1f6" stop-opacity="0.9"/><stop offset=".4" stop-color="#e0e1f6" stop-opacity="0.738"/><stop offset=".72" stop-color="#e0e1f6" stop-opacity="0.27"/><stop offset="1" stop-color="#e0e1f6" stop-opacity="0"/></radialGradient><ellipse cx="33" cy="95" rx="11.4" ry="5.9" fill="url(#ag57)"/><radialGradient id="ag58"><stop offset="0" stop-color="#d9dcf4" stop-opacity="0.9"/><stop offset=".4" stop-color="#d9dcf4" stop-opacity="0.738"/><stop offset=".72" stop-color="#d9dcf4" stop-opacity="0.27"/><stop offset="1" stop-color="#d9dcf4" stop-opacity="0"/></radialGradient><ellipse cx="46" cy="111" rx="11.4" ry="6.4" fill="url(#ag58)"/><radialGradient id="ag59"><stop offset="0" stop-color="#eceef9" stop-opacity="0.95"/><stop offset=".4" stop-color="#eceef9" stop-opacity="0.779"/><stop offset=".72" stop-color="#eceef9" stop-opacity="0.285"/><stop offset="1" stop-color="#eceef9" stop-opacity="0"/></radialGradient><ellipse cx="7" cy="115" rx="8.4" ry="6.4" fill="url(#ag59)"/><radialGradient id="ag60"><stop offset="0" stop-color="#c9ccf0" stop-opacity="0.7"/><stop offset=".4" stop-color="#c9ccf0" stop-opacity="0.574"/><stop offset=".72" stop-color="#c9ccf0" stop-opacity="0.21"/><stop offset="1" stop-color="#c9ccf0" stop-opacity="0"/></radialGradient><ellipse cx="70" cy="92" rx="12.4" ry="5.4" fill="url(#ag60)"/><radialGradient id="ag61"><stop offset="0" stop-color="#c4c9ee" stop-opacity="0.6"/><stop offset=".4" stop-color="#c4c9ee" stop-opacity="0.492"/><stop offset=".72" stop-color="#c4c9ee" stop-opacity="0.18"/><stop offset="1" stop-color="#c4c9ee" stop-opacity="0"/></radialGradient><ellipse cx="24" cy="104" rx="12.4" ry="5.4" fill="url(#ag61)"/><radialGradient id="ag62"><stop offset="0" stop-color="#cbd6f4" stop-opacity="0.7"/><stop offset=".4" stop-color="#cbd6f4" stop-opacity="0.574"/><stop offset=".72" stop-color="#cbd6f4" stop-opacity="0.21"/><stop offset="1" stop-color="#cbd6f4" stop-opacity="0"/></radialGradient><ellipse cx="82" cy="108" rx="10.4" ry="5.4" fill="url(#ag62)"/><radialGradient id="ag63"><stop offset="0" stop-color="#d3d3f2" stop-opacity="0.8"/><stop offset=".4" stop-color="#d3d3f2" stop-opacity="0.656"/><stop offset=".72" stop-color="#d3d3f2" stop-opacity="0.24"/><stop offset="1" stop-color="#d3d3f2" stop-opacity="0"/></radialGradient><ellipse cx="101" cy="64" rx="8.4" ry="5.9" fill="url(#ag63)"/><radialGradient id="ag64"><stop offset="0" stop-color="#e1e6f8" stop-opacity="0.85"/><stop offset=".4" stop-color="#e1e6f8" stop-opacity="0.697"/><stop offset=".72" stop-color="#e1e6f8" stop-opacity="0.255"/><stop offset="1" stop-color="#e1e6f8" stop-opacity="0"/></radialGradient><ellipse cx="160" cy="7" rx="18.4" ry="6.4" fill="url(#ag64)"/><radialGradient id="ag65"><stop offset="0" stop-color="#eef1fb" stop-opacity="0.9"/><stop offset=".4" stop-color="#eef1fb" stop-opacity="0.738"/><stop offset=".72" stop-color="#eef1fb" stop-opacity="0.27"/><stop offset="1" stop-color="#eef1fb" stop-opacity="0"/></radialGradient><ellipse cx="190" cy="6" rx="14.4" ry="6.4" fill="url(#ag65)"/><radialGradient id="ag66"><stop offset="0" stop-color="#f6fafd" stop-opacity="0.95"/><stop offset=".4" stop-color="#f6fafd" stop-opacity="0.779"/><stop offset=".72" stop-color="#f6fafd" stop-opacity="0.285"/><stop offset="1" stop-color="#f6fafd" stop-opacity="0"/></radialGradient><ellipse cx="236" cy="10" rx="12.4" ry="6.4" fill="url(#ag66)"/><radialGradient id="ag67"><stop offset="0" stop-color="#def0fa" stop-opacity="0.8"/><stop offset=".4" stop-color="#def0fa" stop-opacity="0.656"/><stop offset=".72" stop-color="#def0fa" stop-opacity="0.24"/><stop offset="1" stop-color="#def0fa" stop-opacity="0"/></radialGradient><ellipse cx="216" cy="12" rx="10.4" ry="5.4" fill="url(#ag67)"/><radialGradient id="ag68"><stop offset="0" stop-color="#dcd8f6" stop-opacity="0.9"/><stop offset=".4" stop-color="#dcd8f6" stop-opacity="0.738"/><stop offset=".72" stop-color="#dcd8f6" stop-opacity="0.27"/><stop offset="1" stop-color="#dcd8f6" stop-opacity="0"/></radialGradient><ellipse cx="245" cy="52" rx="8.4" ry="6.4" fill="url(#ag68)"/><radialGradient id="ag69"><stop offset="0" stop-color="#cbc6f2" stop-opacity="0.8"/><stop offset=".4" stop-color="#cbc6f2" stop-opacity="0.656"/><stop offset=".72" stop-color="#cbc6f2" stop-opacity="0.24"/><stop offset="1" stop-color="#cbc6f2" stop-opacity="0"/></radialGradient><ellipse cx="236" cy="50" rx="8.4" ry="5.4" fill="url(#ag69)"/><radialGradient id="ag70"><stop offset="0" stop-color="#f4f6fc" stop-opacity="0.95"/><stop offset=".4" stop-color="#f4f6fc" stop-opacity="0.779"/><stop offset=".72" stop-color="#f4f6fc" stop-opacity="0.285"/><stop offset="1" stop-color="#f4f6fc" stop-opacity="0"/></radialGradient><ellipse cx="173" cy="87" rx="6.4" ry="6.4" fill="url(#ag70)"/><radialGradient id="ag71"><stop offset="0" stop-color="#eef2fa" stop-opacity="0.8"/><stop offset=".4" stop-color="#eef2fa" stop-opacity="0.656"/><stop offset=".72" stop-color="#eef2fa" stop-opacity="0.24"/><stop offset="1" stop-color="#eef2fa" stop-opacity="0"/></radialGradient><ellipse cx="184" cy="90" rx="5.4" ry="4.4" fill="url(#ag71)"/><radialGradient id="ag72"><stop offset="0" stop-color="#c4e2f6" stop-opacity="0.7"/><stop offset=".4" stop-color="#c4e2f6" stop-opacity="0.574"/><stop offset=".72" stop-color="#c4e2f6" stop-opacity="0.21"/><stop offset="1" stop-color="#c4e2f6" stop-opacity="0"/></radialGradient><ellipse cx="166" cy="98" rx="12.4" ry="5.4" fill="url(#ag72)"/><radialGradient id="ag73"><stop offset="0" stop-color="#b9e2f4" stop-opacity="0.6"/><stop offset=".4" stop-color="#b9e2f4" stop-opacity="0.492"/><stop offset=".72" stop-color="#b9e2f4" stop-opacity="0.18"/><stop offset="1" stop-color="#b9e2f4" stop-opacity="0"/></radialGradient><ellipse cx="182" cy="106" rx="10.4" ry="5.4" fill="url(#ag73)"/><radialGradient id="ag74"><stop offset="0" stop-color="#cfeee8" stop-opacity="0.8"/><stop offset=".4" stop-color="#cfeee8" stop-opacity="0.656"/><stop offset=".72" stop-color="#cfeee8" stop-opacity="0.24"/><stop offset="1" stop-color="#cfeee8" stop-opacity="0"/></radialGradient><ellipse cx="8" cy="176" rx="14.4" ry="5.4" fill="url(#ag74)"/><radialGradient id="ag75"><stop offset="0" stop-color="#bdeede" stop-opacity="0.6"/><stop offset=".4" stop-color="#bdeede" stop-opacity="0.492"/><stop offset=".72" stop-color="#bdeede" stop-opacity="0.18"/><stop offset="1" stop-color="#bdeede" stop-opacity="0"/></radialGradient><ellipse cx="36" cy="175" rx="10.4" ry="4.9" fill="url(#ag75)"/><radialGradient id="ag76"><stop offset="0" stop-color="#b9ecdc" stop-opacity="0.5"/><stop offset=".4" stop-color="#b9ecdc" stop-opacity="0.41"/><stop offset=".72" stop-color="#b9ecdc" stop-opacity="0.15"/><stop offset="1" stop-color="#b9ecdc" stop-opacity="0"/></radialGradient><ellipse cx="42" cy="164" rx="9.4" ry="4.4" fill="url(#ag76)"/><radialGradient id="ag77"><stop offset="0" stop-color="#9be6dc" stop-opacity="0.5"/><stop offset=".4" stop-color="#9be6dc" stop-opacity="0.41"/><stop offset=".72" stop-color="#9be6dc" stop-opacity="0.15"/><stop offset="1" stop-color="#9be6dc" stop-opacity="0"/></radialGradient><ellipse cx="66" cy="158" rx="16.4" ry="4.9" fill="url(#ag77)"/><radialGradient id="ag78"><stop offset="0" stop-color="#a4dce6" stop-opacity="0.5"/><stop offset=".4" stop-color="#a4dce6" stop-opacity="0.41"/><stop offset=".72" stop-color="#a4dce6" stop-opacity="0.15"/><stop offset="1" stop-color="#a4dce6" stop-opacity="0"/></radialGradient><ellipse cx="26" cy="155" rx="10.4" ry="4.4" fill="url(#ag78)"/><radialGradient id="ag79"><stop offset="0" stop-color="#9bf7b0" stop-opacity="0.6"/><stop offset=".4" stop-color="#9bf7b0" stop-opacity="0.492"/><stop offset=".72" stop-color="#9bf7b0" stop-opacity="0.18"/><stop offset="1" stop-color="#9bf7b0" stop-opacity="0"/></radialGradient><ellipse cx="60" cy="212" rx="28.4" ry="5.4" fill="url(#ag79)"/><radialGradient id="ag80"><stop offset="0" stop-color="#c4f0de" stop-opacity="0.6"/><stop offset=".4" stop-color="#c4f0de" stop-opacity="0.492"/><stop offset=".72" stop-color="#c4f0de" stop-opacity="0.18"/><stop offset="1" stop-color="#c4f0de" stop-opacity="0"/></radialGradient><ellipse cx="170" cy="144" rx="8.4" ry="4.4" fill="url(#ag80)"/><radialGradient id="ag81"><stop offset="0" stop-color="#b4f0d8" stop-opacity="0.5"/><stop offset=".4" stop-color="#b4f0d8" stop-opacity="0.41"/><stop offset=".72" stop-color="#b4f0d8" stop-opacity="0.15"/><stop offset="1" stop-color="#b4f0d8" stop-opacity="0"/></radialGradient><ellipse cx="158" cy="152" rx="12.4" ry="4.4" fill="url(#ag81)"/><radialGradient id="ag82"><stop offset="0" stop-color="#c4f6d8" stop-opacity="0.6"/><stop offset=".4" stop-color="#c4f6d8" stop-opacity="0.492"/><stop offset=".72" stop-color="#c4f6d8" stop-opacity="0.18"/><stop offset="1" stop-color="#c4f6d8" stop-opacity="0"/></radialGradient><ellipse cx="214" cy="160" rx="5.4" ry="5.4" fill="url(#ag82)"/><radialGradient id="ag83"><stop offset="0" stop-color="#8edbe0" stop-opacity="0.4"/><stop offset=".4" stop-color="#8edbe0" stop-opacity="0.328"/><stop offset=".72" stop-color="#8edbe0" stop-opacity="0.12"/><stop offset="1" stop-color="#8edbe0" stop-opacity="0"/></radialGradient><ellipse cx="110" cy="148" rx="22.4" ry="5.4" fill="url(#ag83)"/><radialGradient id="ag84"><stop offset="0" stop-color="#c8f99a" stop-opacity="0.6"/><stop offset=".4" stop-color="#c8f99a" stop-opacity="0.492"/><stop offset=".72" stop-color="#c8f99a" stop-opacity="0.18"/><stop offset="1" stop-color="#c8f99a" stop-opacity="0"/></radialGradient><ellipse cx="34" cy="228" rx="7.4" ry="6.4" fill="url(#ag84)"/><g><path d="M10 18.5L20 16.2L34 15.8L57 14L66 14.6L75 17L83 21.5L91 27.5L100 38L105 47L109 55.5L108 64L107 70L104 80L101 88L98 91L92 88.5L86 84L80 79.5L72 71L64 62.5L57 55L50 47.5L44 44L37 40.5L32 37L28 34L23 30.5L19 27L15.5 25L13 22.8L11.5 20.8Z" fill="url(#wingL)"/><path d="M238.5 24L230 21.5L217 20.4L200 20L184.5 19.8L176 20.4L170 21.8L159 26.2L152 32L147 38L142.5 43.5L139 45.5L135.6 46.5L134.2 52L134.5 58L136.5 65L139 71.6L143 80L147.3 89L151.9 91.4L157 86L162.4 81L170 75L177.5 69.3L184 64L189 60L198.4 51.8L204 47L210 42.5L215 40L220.5 36.7L225 33.5L228.6 31L232 29L235.6 26.8Z" fill="url(#wingR)"/><path d="M57 14L66 14.6L75 17L83 21.5L91 27.5L100 38L105 47L109 55.5L108 64L105 66L101 55L95 44L88 34L80 26L70 19.5Z" fill="#c9c587" opacity=".85"/><path d="M184.5 19.8L176 20.4L170 21.8L159 26.2L152 32L147 38L142.5 43.5L139 45.5L135.6 46.5L134.2 52L134.5 58L137 62L141 54L147 46L154 38L162 31L172 25Z" fill="#c9c587" opacity=".85"/><path d="M70 19L84 30L94 43L101 58L104 70" stroke="#8f8a5a" stroke-width="1" fill="none" opacity=".55"/><path d="M172 24L159 33L149 45L142 58L140 70" stroke="#8f8a5a" stroke-width="1" fill="none" opacity=".55"/><g stroke="#d6d388" stroke-width=".9" fill="none" opacity=".9"><path d="M13 22L40 22L62 26M19 27L44 29L66 34M28 34L50 37L72 44M37 40L58 46L78 54M50 47L68 56L86 66M57 55L74 64L90 74M64 62L80 72L95 82M72 71L86 79L99 88"/><path d="M236 27L212 26L190 30M229 31L206 33L184 38M221 37L199 41L178 48M210 43L190 50L170 58M198 52L181 60L163 70M189 60L173 68L158 78M177 69L164 77L152 87"/></g><g stroke="#f8f6cf" stroke-width="1.6" fill="none" opacity=".8"><path d="M12 19.5L38 18.5L60 21M16 24.5L42 25.5L64 30M24 30.5L47 33L69 39M33 37L54 41.5L75 49"/><path d="M237 24.8L214 23L192 26M232 28.5L209 29.5L187 34M225 33.5L202 37L181 43M215 39.5L194 45.5L174 53"/></g></g><g><path d="M114.5 75L133.5 75L141 84L142.5 100L140 110L140.8 123L143 125L147 140L151 158L155 190L158 220L159.5 248L90.5 248L92.5 220L96 190L99.5 158L102.5 140L106 125L108 123L106.5 110L104.5 100L106 84Z" fill="url(#dress)"/><path d="M103.5 98L106 99L107 110L106.5 118L111 123L121 130L126 132L124 139L117 137L108 130L101 122L99.5 112L100.5 103Z" fill="#ecc9cb"/><path d="M143.5 98L141 99L140.5 110L141 118L137 123L130 130L128 133L130.5 139.5L136 138L143 130L150 121L151.5 111L149.5 102Z" fill="#ecc9cb"/><ellipse cx="128.5" cy="134.5" rx="8.5" ry="6" fill="#efc7bf"/><path d="M124 132L126 140M129 131L129.5 141M133 132L132 140" stroke="#c98f86" stroke-width=".8" fill="none"/><path d="M107 96Q124 104 140 96L140 112Q124 118 107.5 112Z" fill="#c3b8e4" opacity=".8"/><path d="M109 122L140 122" stroke="#b9addc" stroke-width="1.4" opacity=".8"/><path d="M119.5 60L129.5 60L130 72L119 72Z" fill="#e6c2c2"/><path d="M115.5 69L120 67.5L124.5 72L129.5 67.5L133 69L131.5 75L117 75Z" fill="#b3cdee"/><path d="M110.5 52Q109.5 35.5 123 34.5Q136 35.5 135.2 52L135.5 62L131 62L131 58L116 58L116 62L110 62Z" fill="#2a1a20"/><path d="M113 56Q111 68 107.5 78Q104 88 101.5 99" stroke="#2a1a20" stroke-width="8.5" fill="none" stroke-linecap="round"/><path d="M133 56Q134.5 68 138 78Q141.5 88 144 96" stroke="#2a1a20" stroke-width="8.5" fill="none" stroke-linecap="round"/><path d="M106.5 70q-3 2 -1 5q-4 2 -2 6q-4 2 -2 6q-3 3 -1 6M139 70q3 2 1.5 5q4 2 2 6q4 2 2 6q3 3 1 5" stroke="#2a1a20" stroke-width="3" fill="none" stroke-linecap="round"/><path d="M115.5 48Q115.5 39.5 122.8 38.8Q131 39.5 131.6 48Q132.2 56 128.5 61.5Q124 66.5 119.5 62Q115.8 57 115.5 48Z" fill="#ecd0cf"/><path d="M112.5 50Q112.5 37 122.5 36.5L122.8 39.5Q117 42 115.8 52Z" fill="#2a1a20"/><path d="M134 50Q134 37 123 36.5L122.8 39.5Q130 42 131.4 52Z" fill="#2a1a20"/><path d="M118 48.5h3.6M125.8 48.5h3.6" stroke="#4a3a44" stroke-width="1.1"/><path d="M122 58.6h3.4" stroke="#c9787c" stroke-width="1.3"/><ellipse cx="116.6" cy="51.5" rx="1.6" ry="2.2" fill="#e9a7d8" opacity=".8"/></g></g></g>
</g>
<g class="node" transform="translate(215.98 703.68)">
<rect class="nbody" x="0" y="-30" width="316" height="344" rx="8" filter="url(#sh)"/>
<path class="ntitle" d="M0 0V-22a8 8 0 0 1 8-8H308a8 8 0 0 1 8 8V0Z"/>
<rect x="0" y="-.55" width="316" height="1.45" fill="#000" fill-opacity=".2"/>
<circle cx="15" cy="-15" r="5" fill="#666"/>
<text class="tt" x="30" y="-10">Load Image</text>
<circle cx="306" cy="14" r="4" fill="#64B5F6" stroke="#000"/>
<text class="sl r" x="296" y="19">IMAGE</text>
<circle cx="306" cy="34" r="4" fill="#81C784" stroke="#000"/>
<text class="sl r" x="296" y="39">MASK</text>
<rect class="wb" x="15" y="46" width="285" height="20" rx="10"/>
<path class="ar" d="M31 51L21 56L31 61Z"/>
<path class="ar" d="M284 51L294 56L284 61Z"/>
<text class="wl" x="35" y="60">image</text>
<text class="wv r" x="265" y="60">example.png</text>
<rect class="wb" x="15" y="70" width="285" height="20"/>
<text class="wv c" x="157.5" y="84">choose file to upload</text>
<clipPath id="pclip"><rect width="1018" height="1018"/></clipPath>
<g class="img" transform="translate(47.5 93.55) scale(0.216110)" clip-path="url(#pclip)"><rect x="-10" y="-10" width="1038" height="1038" fill="#5d94fb"/><polygon points="-8,704 2,699 43,681 64,663 82,635 125,615 166,586 202,566 264,548 356,533 412,527 592,525 735,527 756,545 797,561 869,568 940,566 1020,575 1020,1022 -8,1022" fill="#64ff68" stroke="#64ff68" stroke-width="6" stroke-linejoin="round"/><polygon points="85,98 92,77 115,67 140,71 157,54 192,49 217,66 264,71 289,65 325,71 346,67 370,82 374,101 364,117 305,126 176,134 130,132 97,120" fill="#ffffff" stroke="#ffffff" stroke-width="10" stroke-linejoin="round"/><polygon points="702,88 711,67 740,54 797,49 838,52 864,71 879,84 920,85 945,102 964,122 966,142 950,160 916,160 899,185 879,195 859,186 849,167 823,158 766,152 715,116" fill="#ffffff" stroke="#ffffff" stroke-width="10" stroke-linejoin="round"/><polygon points="174,95 188,76 217,77 264,95 305,103 356,129 402,159 433,159 458,174 475,197 481,210 510,208 551,200 561,190 602,180 643,159 689,133 740,108 787,88 821,90 840,107 843,126 826,167 796,213 765,254 734,301 704,342 673,372 659,388 672,408 672,428 657,439 639,436 619,417 604,388 589,357 578,326 561,306 489,306 458,326 452,357 437,378 402,394 376,406 352,401 336,368 347,357 336,331 305,301 274,254 243,203 212,157 192,131 174,110" fill="#fbf36b" stroke="#fbf36b" stroke-width="8" stroke-linejoin="round"/><polygon points="251,148 265,134 294,139 346,164 396,194 420,224 423,254 411,283 387,291 356,279 316,243 275,203 251,167" fill="#f6f5b0" stroke="#f6f5b0" stroke-width="8" stroke-linejoin="round"/><polygon points="630,244 645,220 680,189 726,154 766,139 782,148 779,177 755,217 714,263 679,286 649,288 632,269" fill="#f6f5b0" stroke="#f6f5b0" stroke-width="8" stroke-linejoin="round"/><polygon points="461,285 489,270 520,263 551,270 580,285 591,357 586,377 540,402 541,434 467,434 466,403 458,402 413,383 448,357" fill="#faf0e6" stroke="#faf0e6" stroke-width="6" stroke-linejoin="round"/><polygon points="448,285 461,283 457,326 452,357 437,378 407,388 387,357" fill="#fbf36b" stroke="#fbf36b" stroke-width="6" stroke-linejoin="round"/><polygon points="579,283 597,285 628,357 638,408 619,417 604,388 589,357" fill="#fbf36b" stroke="#fbf36b" stroke-width="6" stroke-linejoin="round"/><circle cx="471" cy="317" r="28" fill="#1252e8"/><circle cx="556" cy="316" r="28" fill="#1252e8"/><ellipse cx="470" cy="317" rx="4" ry="6" fill="#0a0a18" transform="rotate(25 470 317)"/><ellipse cx="555" cy="316" rx="7" ry="4" fill="#0a0a18" transform="rotate(20 555 316)"/><path d="M479 372Q502 386 528 370" stroke="#111" stroke-width="7" fill="none" stroke-linecap="round"/><line x1="276" y1="487" x2="423" y2="484" stroke="#faf0e6" stroke-width="56" stroke-linecap="round"/><line x1="592" y1="483" x2="766" y2="474" stroke="#faf0e6" stroke-width="54" stroke-linecap="round"/><polygon points="364,876 461,879 446,925 431,961 415,985 396,1006 391,1017 303,1017 295,993 308,967 337,936" fill="#faf0e6" stroke="#faf0e6" stroke-width="8" stroke-linejoin="round"/><polygon points="517,876 628,874 633,935 640,991 638,1017 551,1017 533,986 528,956 530,925" fill="#faf0e6" stroke="#faf0e6" stroke-width="8" stroke-linejoin="round"/><polygon points="443,434 510,432 576,440 587,460 591,511 592,602 618,668 643,745 648,797 657,838 650,857 627,868 535,874 458,874 377,876 358,868 352,848 359,817 379,766 404,704 412,627 417,550 417,490 423,454" fill="#ffa6d4" stroke="#ffa6d4" stroke-width="10" stroke-linejoin="round"/></g>
</g>
<g class="node" transform="translate(614.98 707.4)">
<rect class="nbody" x="0" y="-30" width="211" height="76" rx="8" filter="url(#sh)"/>
<path class="ntitle" d="M0 0V-22a8 8 0 0 1 8-8H203a8 8 0 0 1 8 8V0Z"/>
<rect x="0" y="-.55" width="211" height="1.45" fill="#000" fill-opacity=".2"/>
<circle cx="15" cy="-15" r="5" fill="#666"/>
<text class="tt" x="30" y="-10">VAE Encode</text>
<circle cx="10" cy="14" r="4" fill="#64B5F6"/>
<text class="sl" x="20" y="19">pixels</text>
<circle cx="10" cy="34" r="4" fill="#FF6E6E"/>
<text class="sl" x="20" y="39">vae</text>
<circle cx="201" cy="14" r="4" fill="#FF9CF9" stroke="#000"/>
<text class="sl r" x="191" y="19">LATENT</text>
</g>
<g class="node" transform="translate(863 186)">
<rect class="nbody" x="0" y="-30" width="316" height="292" rx="8" filter="url(#sh)"/>
<path class="ntitle" d="M0 0V-22a8 8 0 0 1 8-8H308a8 8 0 0 1 8 8V0Z"/>
<rect x="0" y="-.55" width="316" height="1.45" fill="#000" fill-opacity=".2"/>
<circle cx="15" cy="-15" r="5" fill="#666"/>
<text class="tt" x="30" y="-10">KSampler</text>
<circle cx="10" cy="14" r="4" fill="#B39DDB"/>
<text class="sl" x="20" y="19">model</text>
<circle cx="10" cy="34" r="4" fill="#FFA931"/>
<text class="sl" x="20" y="39">positive</text>
<circle cx="10" cy="54" r="4" fill="#FFA931"/>
<text class="sl" x="20" y="59">negative</text>
<circle cx="10" cy="74" r="4" fill="#FF9CF9"/>
<text class="sl" x="20" y="79">latent_image</text>
<circle cx="306" cy="14" r="4" fill="#FF9CF9" stroke="#000"/>
<text class="sl r" x="296" y="19">LATENT</text>
<rect class="wb" x="15" y="86" width="285" height="20" rx="10"/>
<path class="ar" d="M31 91L21 96L31 101Z"/>
<path class="ar" d="M284 91L294 96L284 101Z"/>
<text class="wl" x="35" y="100">seed</text>
<text class="wv r" x="265" y="100">280823642470253</text>
<rect class="wb" x="15" y="110" width="285" height="20" rx="10"/>
<path class="ar" d="M31 115L21 120L31 125Z"/>
<path class="ar" d="M284 115L294 120L284 125Z"/>
<text class="wl" x="35" y="124">control_after_generate</text>
<text class="wv r" x="265" y="124">randomize</text>
<rect class="wb" x="15" y="134" width="285" height="20" rx="10"/>
<path class="ar" d="M31 139L21 144L31 149Z"/>
<path class="ar" d="M284 139L294 144L284 149Z"/>
<text class="wl" x="35" y="148">steps</text>
<text class="wv r" x="265" y="148">20</text>
<rect class="wb" x="15" y="158" width="285" height="20" rx="10"/>
<path class="ar" d="M31 163L21 168L31 173Z"/>
<path class="ar" d="M284 163L294 168L284 173Z"/>
<text class="wl" x="35" y="172">cfg</text>
<text class="wv r" x="265" y="172">8.000</text>
<rect class="wb" x="15" y="182" width="285" height="20" rx="10"/>
<path class="ar" d="M31 187L21 192L31 197Z"/>
<path class="ar" d="M284 187L294 192L284 197Z"/>
<text class="wl" x="35" y="196">sampler_name</text>
<text class="wv r" x="265" y="196">dpmpp_2m</text>
<rect class="wb" x="15" y="206" width="285" height="20" rx="10"/>
<path class="ar" d="M31 211L21 216L31 221Z"/>
<path class="ar" d="M284 211L294 216L284 221Z"/>
<text class="wl" x="35" y="220">scheduler</text>
<text class="wv r" x="265" y="220">normal</text>
<rect class="wb" x="15" y="230" width="285" height="20" rx="10"/>
<path class="ar" d="M31 235L21 240L31 245Z"/>
<path class="ar" d="M284 235L294 240L284 245Z"/>
<text class="wl" x="35" y="244">denoise</text>
<text class="wv r" x="265" y="244">0.870</text>
</g>
<g class="node" transform="translate(19 433)">
<rect class="nbody" x="0" y="-30" width="316" height="128" rx="8" filter="url(#sh)"/>
<path class="ntitle" d="M0 0V-22a8 8 0 0 1 8-8H308a8 8 0 0 1 8 8V0Z"/>
<rect x="0" y="-.55" width="316" height="1.45" fill="#000" fill-opacity=".2"/>
<circle cx="15" cy="-15" r="5" fill="#666"/>
<text class="tt" x="30" y="-10">Load Checkpoint</text>
<circle cx="306" cy="14" r="4" fill="#B39DDB" stroke="#000"/>
<text class="sl r" x="296" y="19">MODEL</text>
<circle cx="306" cy="34" r="4" fill="#FFD500" stroke="#000"/>
<text class="sl r" x="296" y="39">CLIP</text>
<circle cx="306" cy="54" r="4" fill="#FF6E6E" stroke="#000"/>
<text class="sl r" x="296" y="59">VAE</text>
<rect class="wb" x="15" y="66" width="285" height="20" rx="10"/>
<path class="ar" d="M31 71L21 76L31 81Z"/>
<path class="ar" d="M284 71L294 76L284 81Z"/>
<text class="wl" x="35" y="80">ckpt_name</text>
<text class="wv r" x="265" y="80">v1-5-pruned-emaonly.ckpt</text>
</g>
</g>
</svg>
</body></html>
